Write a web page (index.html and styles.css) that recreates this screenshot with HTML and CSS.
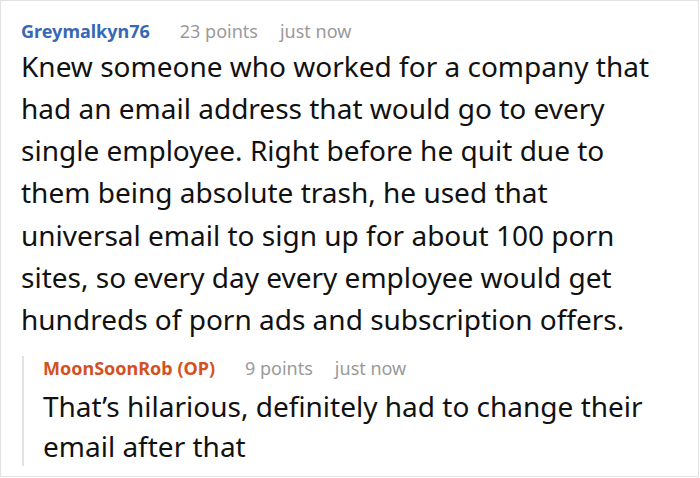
FILE: index.html
```html
<!DOCTYPE html>
<html>
<head>
<meta charset="utf-8">
<link rel="stylesheet" href="styles.css">
</head>
<body>
<div class="card">
  <div class="comment">
    <div class="meta">
      <span class="author">Greymalkyn76</span>
      <span class="points">23 points</span>
      <span class="time">just now</span>
    </div>
    <p class="text">Knew someone who worked for a company that had an email address that would go to every single employee. Right before he quit due to them being absolute trash, he used that universal email to sign up for about 100 porn sites, so every day every employee would get hundreds of porn ads and subscription offers.</p>
  </div>
  <div class="reply">
    <div class="meta">
      <span class="author op">MoonSoonRob (OP)</span>
      <span class="points">9 points</span>
      <span class="time">just now</span>
    </div>
    <p class="text">That’s hilarious, definitely had to change their email after that</p>
  </div>
</div>
</body>
</html>
```
FILE: styles.css
```css
html, body {
  margin: 0;
  padding: 0;
  background: #fff;
}
body {
  font-family: "Noto Sans", "Open Sans", sans-serif;
  color: #111;
}
.card {
  width: 697px;
  height: 475px;
  border: 1px solid #e2e2e2;
  overflow: hidden;
}
.comment {
  padding: 18px 24px 0 20px;
}
.meta {
  display: flex;
  align-items: baseline;
  font-size: 18px;
  line-height: 24px;
  white-space: nowrap;
}
.author {
  font-weight: 700;
  color: #3768b6;
  margin-right: 30px;
}
.author.op {
  color: #d4511f;
}
.points {
  color: #9a9a9a;
  margin-right: 22px;
}
.time {
  color: #9a9a9a;
}
.text {
  margin: 1.5px 0 0 0;
  font-size: 28px;
  line-height: 42.33px;
}
.reply {
  margin: 26.5px 0 0 21px;
  padding-left: 19px;
  border-left: 2px solid #e2e2e2;
}
.reply .meta {
  margin-top: -11px;
}
.reply .text {
  margin: 5.4px 0 -7px 0;
  line-height: 40px;
}
```
